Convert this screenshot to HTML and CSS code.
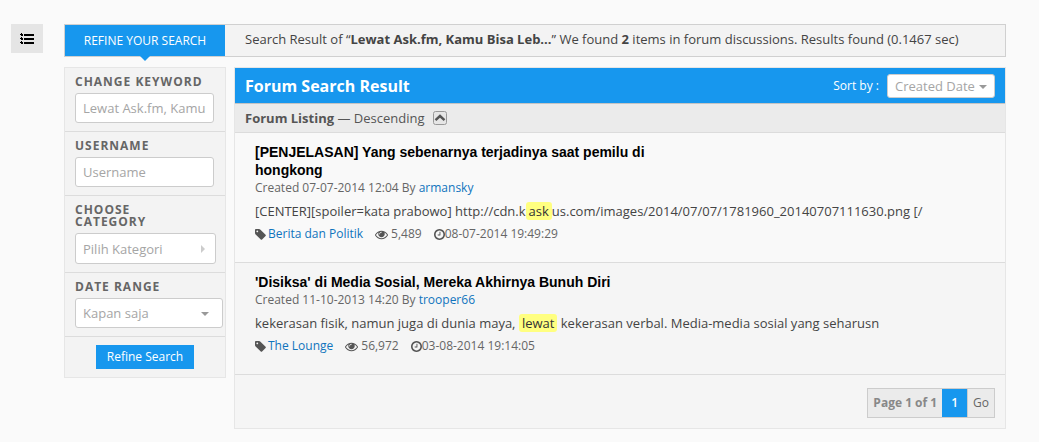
FILE: index.html
```html
<!DOCTYPE html>
<html lang="id">
<head>
<meta charset="utf-8">
<title>Forum Search Result</title>
<link rel="stylesheet" href="styles.css">
</head>
<body>
<svg class="sprite" aria-hidden="true">
  <symbol id="tag" viewBox="0 0 1536 1792"><path d="M448 448q0-53-37.500-90.500t-90.500-37.500-90.500 37.500-37.500 90.500 37.500 90.500 90.500 37.500 90.500-37.500 37.500-90.500zm1067 576q0 53-37 90l-491 492q-39 37-91 37-53 0-90-37l-715-716q-38-37-64.500-101t-26.500-117v-416q0-52 38-90t90-38h416q53 0 117 26.500t102 64.500l715 714q37 39 37 91z"/></symbol>
  <symbol id="eye" viewBox="0 0 1792 1792"><path d="M1664 960q-152-236-381-353 61 104 61 225 0 185-131.500 316.500t-316.500 131.500-316.500-131.500-131.500-316.500q0-121 61-225-229 117-381 353 133 205 333.500 326.500t434.500 121.500 434.500-121.500 333.500-326.500zm-720-384q0-20-14-34t-34-14q-125 0-214.500 89.500t-89.500 214.500q0 20 14 34t34 14 34-14 14-34q0-86 61-147t147-61q20 0 34-14t14-34zm848 384q0 34-20 69-140 230-376.500 368.500t-499.500 138.500-499.500-139-376.500-368q-20-35-20-69t20-69q140-229 376.500-368t499.500-139 499.500 139 376.500 368q20 35 20 69z"/></symbol>
  <symbol id="clock" viewBox="128 0 1536 1792"><path d="M1024 544v448q0 14-9 23t-23 9h-320q-14 0-23-9t-9-23v-64q0-14 9-23t23-9h224v-352q0-14 9-23t23-9h64q14 0 23 9t9 23zm416 352q0-148-73-273t-198-198-273-73-273 73-198 198-73 273 73 273 198 198 273 73 273-73 198-198 73-273zm224 0q0 209-103 385.500t-279.500 279.500-385.500 103-385.500-103-279.500-279.500-103-385.500 103-385.500 279.500-279.500 385.500-103 385.500 103 279.500 279.500 103 385.500z"/></symbol>
</svg>
<div class="page">
  <button class="menu-button" type="button" aria-label="Menu">
    <svg width="14" height="12" viewBox="0 0 14 12"><path d="M4 1h10v2H4zM4 5h10v2H4zM4 9h10v2H4zM1 0h1v1h1v2H1V2H0V1h1zM1 4h1v1h1v2H1V6H0V5h1zM1 8h1v1h1v2H1v-1H0V9h1z"/></svg>
  </button>
  <main class="content">
    <header class="summary">
      <button class="refine-tab" type="button">REFINE YOUR SEARCH</button>
      <p class="summary-text">Search Result of “<strong>Lewat Ask.fm, Kamu Bisa Leb...</strong>” We found <strong>2</strong> items in forum discussions. Results found (0.1467 sec)</p>
    </header>
    <div class="columns">
      <form class="filters">
        <div class="filter">
          <label class="filter-title" for="keyword">CHANGE KEYWORD</label>
          <input class="field" id="keyword" type="text" value="Lewat Ask.fm, Kamu Bisa Lebih Dekat">
        </div>
        <div class="filter">
          <label class="filter-title" for="username">USERNAME</label>
          <input class="field" id="username" type="text" placeholder="Username">
        </div>
        <div class="filter">
          <label class="filter-title" for="category">CHOOSE<br>CATEGORY</label>
          <button class="field category" id="category" type="button">Pilih Kategori</button>
        </div>
        <div class="filter">
          <label class="filter-title" for="range">DATE RANGE</label>
          <div class="select range"><select class="field" id="range"><option>Kapan saja</option></select></div>
        </div>
        <div class="submit-row"><button class="submit" type="button">Refine Search</button></div>
      </form>
      <section class="results">
        <div class="results-head">
          <h1 class="results-title">Forum Search Result</h1>
          <label class="sort-label" for="sort">Sort by :</label>
          <div class="select sort"><select class="field" id="sort"><option>Created Date</option></select></div>
        </div>
        <div class="listing-head">
          <span><strong>Forum Listing</strong> — Descending</span>
          <button class="order" type="button" aria-label="Change order">
            <svg width="14" height="14" viewBox="0 0 14 14"><rect class="order-box" x=".5" y=".5" width="13" height="13" rx="2"/><path class="order-arrow" d="M2.500 9.200L7 5l4.500 4.200"/></svg>
          </button>
        </div>
        <article class="item">
          <h2 class="item-title">[PENJELASAN] Yang sebenarnya terjadinya saat pemilu di hongkong</h2>
          <p class="created">Created 07-07-2014 12:04 By <a href="#">armansky</a></p>
          <p class="excerpt">[CENTER][spoiler=kata prabowo] http://cdn.k<mark>ask</mark>us.com/images/2014/07/07/1781960_20140707111630.png [/</p>
          <div class="meta">
            <span class="stat"><svg class="icon tag"><use href="#tag"/></svg><a href="#">Berita dan Politik</a></span>
            <span class="stat"><svg class="icon eye"><use href="#eye"/></svg>5,489</span>
            <span class="stat"><svg class="icon clock"><use href="#clock"/></svg>08-07-2014 19:49:29</span>
          </div>
        </article>
        <article class="item alt">
          <h2 class="item-title">'Disiksa' di Media Sosial, Mereka Akhirnya Bunuh Diri</h2>
          <p class="created">Created 11-10-2013 14:20 By <a href="#">trooper66</a></p>
          <p class="excerpt">kekerasan fisik, namun juga di dunia maya, <mark>lewat</mark> kekerasan verbal. Media-media sosial yang seharusn</p>
          <div class="meta">
            <span class="stat"><svg class="icon tag"><use href="#tag"/></svg><a href="#">The Lounge</a></span>
            <span class="stat"><svg class="icon eye"><use href="#eye"/></svg>56,972</span>
            <span class="stat"><svg class="icon clock"><use href="#clock"/></svg>03-08-2014 19:14:05</span>
          </div>
        </article>
        <footer class="results-foot">
          <nav class="pager" aria-label="Pages">
            <span class="pager-info">Page 1 of 1</span>
            <a class="pager-current" href="#">1</a>
            <button class="pager-go" type="button">Go</button>
          </nav>
        </footer>
      </section>
    </div>
  </main>
</div>
</body>
</html>
```
FILE: styles.css
```css
* { box-sizing: border-box; }
body {
  margin: 0;
  background: #fafafa;
  color: #444;
  font: 13px/18px "Open Sans", sans-serif;
}
h1, h2, p { margin: 0; }
button, input, select { font: inherit; }
button { border: 0; padding: 0; cursor: pointer; }
a { color: #1074bd; text-decoration: none; }
.sprite { display: none; }

.page {
  display: flex;
  align-items: flex-start;
  gap: 21px;
  padding: 24px 33px 13px 11px;
}
.menu-button {
  display: flex;
  align-items: center;
  justify-content: center;
  flex: none;
  width: 32px;
  height: 29px;
  background: #e5e5e5;
}
.content { flex: 1; min-width: 0; }

.summary {
  display: flex;
  border: 1px solid #d0d0d0;
  background: #f3f3f3;
  margin-bottom: 10px;
}
.refine-tab {
  position: relative;
  flex: none;
  width: 160px;
  height: 31px;
  background: #1797ee;
  color: #fff;
  font-size: 12px;
}
.refine-tab::after {
  content: "";
  position: absolute;
  top: 100%;
  left: 50%;
  margin-left: -5px;
  border: 5px solid transparent;
  border-top-color: #1797ee;
  border-bottom: 0;
}
.summary-text { padding: 5px 20px; }

.columns { display: flex; align-items: flex-start; gap: 8px; }

.filters {
  flex: none;
  width: 162px;
  border: 1px solid #e6e6e6;
  background: #f3f3f3;
}
.filter { padding: 8px 10px; border-bottom: 1px solid #dcdcdc; }
.filter-title {
  display: block;
  margin-bottom: 5px;
  color: #666;
  font-size: 12px;
  font-weight: 700;
  line-height: 12px;
  letter-spacing: 1px;
}
.field {
  display: block;
  width: 139px;
  height: 30px;
  padding: 0 7px;
  border: 1px solid #ccc;
  border-radius: 3px;
  background: #fff;
  color: #a5a5a5;
  text-align: left;
}
.field::placeholder { color: #a5a5a5; }
.category {
  display: flex;
  align-items: center;
  justify-content: space-between;
  width: 141px;
  height: 31px;
  padding-right: 10px;
}
.category::after {
  content: "";
  border: 4px solid transparent;
  border-left-color: #ccc;
  border-right: 0;
}
.select { position: relative; }
.select .field { width: 100%; appearance: none; }
.select::after {
  content: "";
  position: absolute;
  top: 50%;
  right: 14px;
  margin-top: -1px;
  border: 4px solid transparent;
  border-top-color: #999;
  border-bottom: 0;
  pointer-events: none;
}
.range { width: 148px; }
.submit-row { padding: 8px; text-align: center; }
.submit {
  display: block;
  margin: 0 auto;
  height: 24px;
  padding: 0 11px;
  background: #1797ee;
  color: #fff;
  font-size: 12px;
}

.results {
  flex: 1;
  min-width: 0;
  border: 1px solid #e6e6e6;
  background: #f5f5f5;
}
.results-head {
  display: flex;
  align-items: center;
  height: 36px;
  padding: 0 10px;
  border-bottom: 1px solid #c4c4c4;
  background: #1797ee;
  color: #fff;
}
.results-title { flex: 1; font-size: 16px; line-height: 24px; }
.sort-label { margin-right: 8px; font-size: 12px; font-weight: 500; }
.sort { width: 108px; }
.sort .field { height: 24px; }
.sort::after { right: 8px; }
.listing-head {
  display: flex;
  align-items: center;
  gap: 8px;
  height: 29px;
  padding: 0 10px;
  border-bottom: 1px solid #dcdcdc;
  background: #ebebeb;
  color: #555;
}
.order { display: flex; background: none; }
.order-box { fill: #e6e6e6; stroke: #999; }
.order-arrow { fill: none; stroke: #555; stroke-width: 2.4; }

.item {
  padding: 10px 20px 19px;
  border-bottom: 1px solid #dcdcdc;
  background: #f9f9f9;
}
.item.alt { background: #f5f5f5; }
.item-title {
  max-width: 420px;
  color: #000;
  font: bold 14px/18px "Liberation Sans", Arial, sans-serif;
}
.created { color: #666; font-size: 12px; }
.excerpt { margin: 5px 0; }
mark {
  padding: 0 3px;
  border-radius: 3px;
  background: #ffff80;
  color: #333;
}
.meta { display: flex; gap: 12px; color: #666; font-size: 12px; }
.stat { display: flex; align-items: center; }
.icon { fill: #555; height: 13px; }
.tag { width: 11px; margin-right: 2px; }
.eye { width: 13px; margin-right: 3px; }
.clock { width: 11px; }

.results-foot { display: flex; justify-content: flex-end; padding: 13px 10px 10px; }
.pager {
  display: flex;
  height: 30px;
  border: 1px solid #ccc;
  background: #ebebeb;
  font-size: 12px;
  line-height: 28px;
}
.pager-info { padding: 0 5px; color: #888; font-weight: bold; }
.pager-current { padding: 0 9px; background: #1797ee; color: #fff; font-weight: 600; }
.pager-go { padding: 0 5px; border-left: 1px solid #ccc; background: none; color: #666; }
```
